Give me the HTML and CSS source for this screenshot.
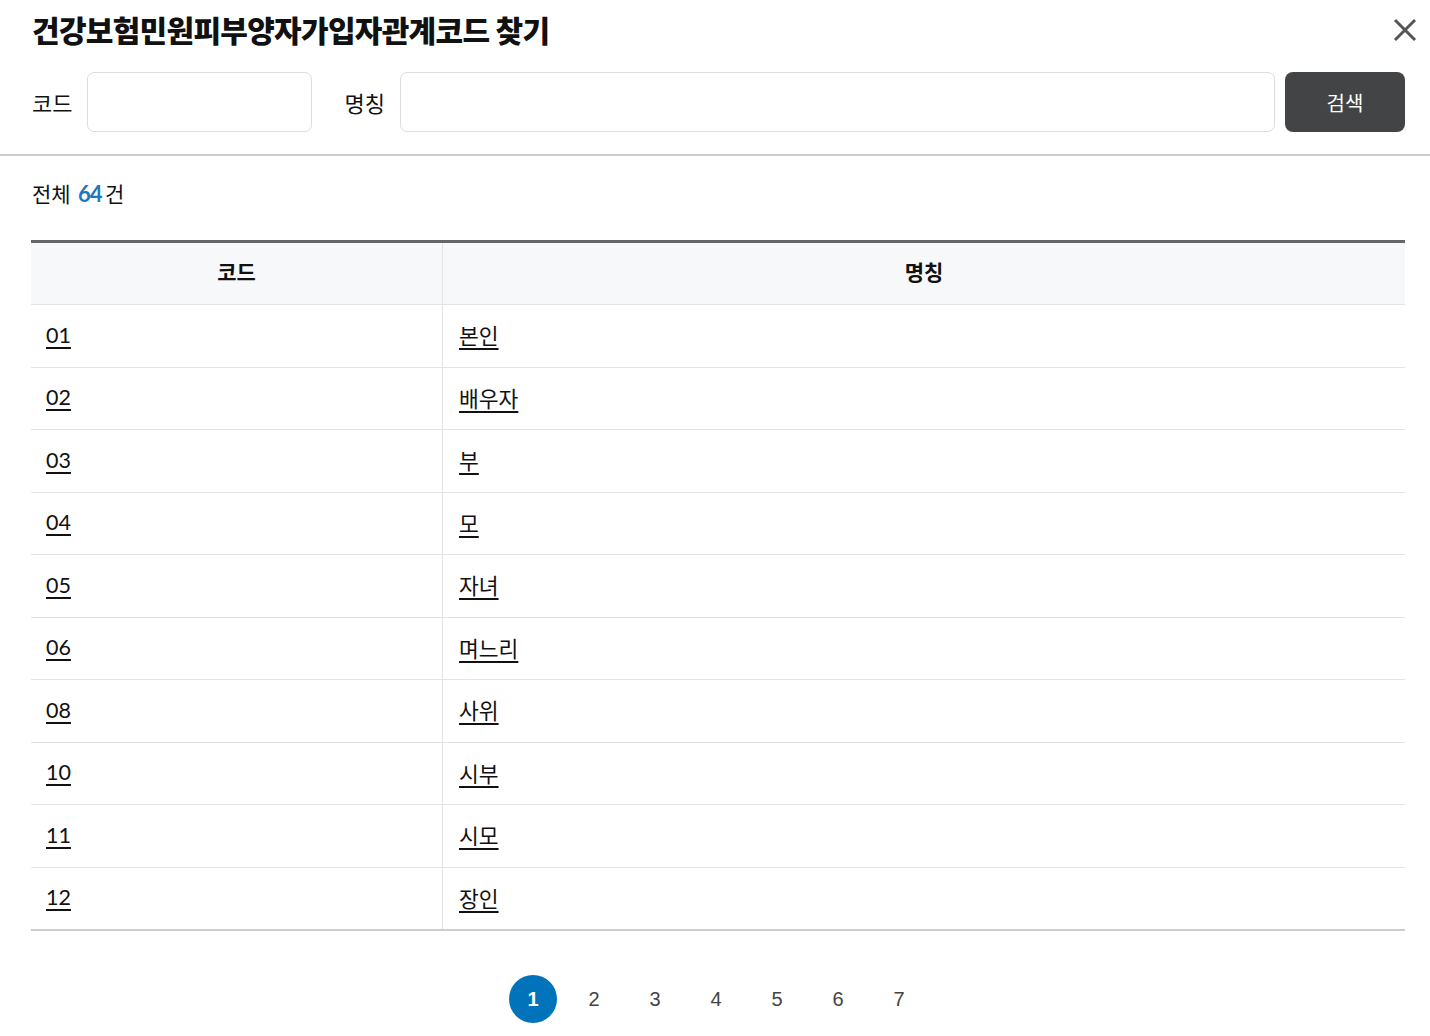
FILE: index.html
```html
<!DOCTYPE html>
<html lang="ko">
<head>
<meta charset="utf-8">
<title>건강보험민원피부양자가입자관계코드 찾기</title>
<link rel="stylesheet" href="styles.css">
</head>
<body>
<div class="popup">
  <div class="head">
    <h1 class="title">건강보험민원피부양자가입자관계코드 찾기</h1>
    <button class="close" aria-label="닫기">
      <svg width="24" height="24" viewBox="0 0 24 24"><path d="M2 2 L22 22 M22 2 L2 22" stroke="#555" stroke-width="3" fill="none"/></svg>
    </button>
  </div>
  <div class="search">
    <label class="lbl">코드</label>
    <input class="inp inp-code" type="text">
    <label class="lbl lbl-name">명칭</label>
    <input class="inp inp-name" type="text">
    <button class="btn">검색</button>
  </div>
</div>
<div class="divider"></div>
<div class="content">
  <p class="count">전체 <b>64</b> 건</p>
  <div class="table">
    <div class="row hrow"><div class="c1">코드</div><div class="c2">명칭</div></div>
    <div class="row"><div class="c1"><a href="#">01</a></div><div class="c2"><a href="#">본인</a></div></div>
    <div class="row"><div class="c1"><a href="#">02</a></div><div class="c2"><a href="#">배우자</a></div></div>
    <div class="row"><div class="c1"><a href="#">03</a></div><div class="c2"><a href="#">부</a></div></div>
    <div class="row"><div class="c1"><a href="#">04</a></div><div class="c2"><a href="#">모</a></div></div>
    <div class="row"><div class="c1"><a href="#">05</a></div><div class="c2"><a href="#">자녀</a></div></div>
    <div class="row"><div class="c1"><a href="#">06</a></div><div class="c2"><a href="#">며느리</a></div></div>
    <div class="row"><div class="c1"><a href="#">08</a></div><div class="c2"><a href="#">사위</a></div></div>
    <div class="row"><div class="c1"><a href="#">10</a></div><div class="c2"><a href="#">시부</a></div></div>
    <div class="row"><div class="c1"><a href="#">11</a></div><div class="c2"><a href="#">시모</a></div></div>
    <div class="row last"><div class="c1"><a href="#">12</a></div><div class="c2"><a href="#">장인</a></div></div>
  </div>
  <div class="paging">
    <span class="pg on">1</span>
    <span class="pg">2</span>
    <span class="pg">3</span>
    <span class="pg">4</span>
    <span class="pg">5</span>
    <span class="pg">6</span>
    <span class="pg">7</span>
  </div>
</div>
</body>
</html>
```
FILE: styles.css
```css
* { box-sizing: border-box; }
html, body { margin: 0; padding: 0; background: #fff; }
body {
  font-family: Lato, "Noto Sans CJK KR", sans-serif;
  color: #111;
  width: 1430px;
  height: 1036px;
  overflow: hidden;
}
.popup { padding: 0 25px 0 32px; }
.head {
  display: flex;
  align-items: center;
  justify-content: space-between;
  height: 60px;
}
.title {
  margin: 0;
  font-size: 30px;
  font-weight: 800;
  letter-spacing: -0.7px;
  color: #111;
  line-height: 1;
}
.close {
  border: 0;
  background: none;
  padding: 0;
  width: 24px;
  height: 24px;
  margin-right: -12px;
  display: flex;
}
.search {
  display: flex;
  align-items: center;
  margin-top: 12px;
  padding-bottom: 22px;
}
.lbl { font-size: 22px; color: #111; }
.inp {
  height: 60px;
  border: 1px solid #ddd;
  border-radius: 7px;
  background: #fff;
  font-size: 18px;
  padding: 0 12px;
  outline: none;
}
.inp-code { width: 225px; margin-left: 15px; }
.lbl-name { margin-left: 32px; }
.inp-name { flex: 1; margin-left: 15px; }
.btn {
  width: 120px;
  height: 60px;
  margin-left: 10px;
  border: 0;
  border-radius: 8px;
  background: #434446;
  color: #fff;
  font-family: "Noto Sans CJK KR", sans-serif;
  font-size: 20px;
}
.divider { height: 2px; background: #ccc; }
.content { padding: 0 25px 0 31px; }
.count {
  margin: 24px 0 0 1px;
  font-size: 21px;
  line-height: 28px;
  color: #111;
}
.count b { color: #1a78be; font-weight: 700; font-size: 22px; margin: 0 -2px 0 2px; letter-spacing: -1px; }
.table {
  margin-top: 32px;
  border-top: 3px solid #666;
  border-bottom: 2px solid #ccc;
}
.row {
  display: grid;
  grid-template-columns: 412px 1fr;
  height: 62.5px;
  border-bottom: 1px solid #e3e3e3;
}
.row.last { border-bottom: 0; height: 61.5px; }
.hrow { background: #f7f8fa; height: 62px; }
.c1, .c2 {
  display: flex;
  align-items: center;
  font-size: 21.5px;
  padding-bottom: 2px;
}
.c1 { padding-left: 15px; border-right: 1px solid #e3e3e3; }
.c2 { padding-left: 16px; }
.hrow .c1, .hrow .c2 { justify-content: center; padding-left: 0; padding-bottom: 5px; font-weight: 700; font-size: 21px; }
.row a { color: #111; text-decoration: underline; text-underline-offset: 4px; text-decoration-thickness: 2px; }
.paging {
  display: flex;
  gap: 13px;
  margin-top: 44px;
  margin-left: 478px;
}
.pg {
  width: 48px;
  height: 48px;
  display: flex;
  align-items: center;
  justify-content: center;
  font-family: "Liberation Sans", Arial, sans-serif;
  font-size: 20px;
  color: #444;
}
.pg.on {
  background: #0073ba;
  color: #fff;
  border-radius: 50%;
  font-weight: 700;
}
```
